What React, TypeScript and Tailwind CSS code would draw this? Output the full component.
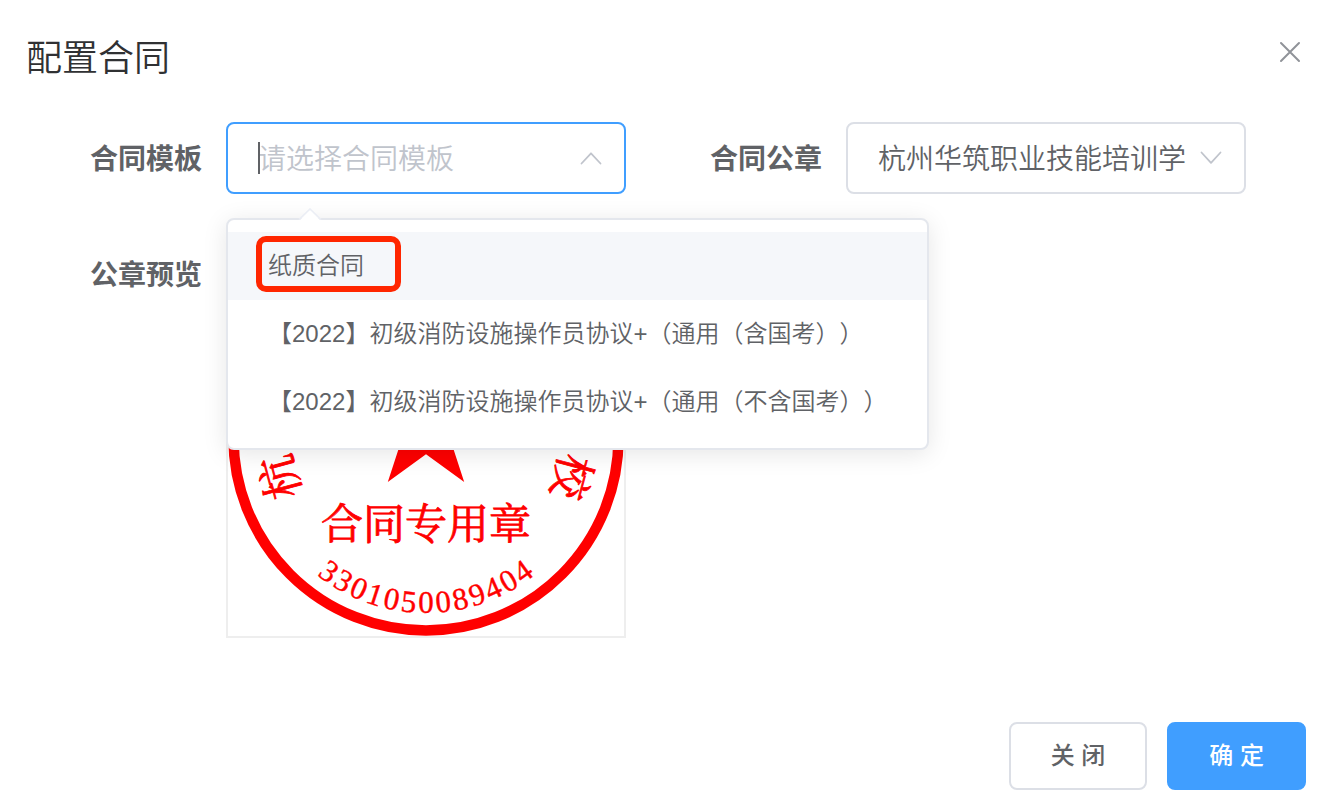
import { useState } from "react";

const templates = [
  "纸质合同",
  "【2022】初级消防设施操作员协议+（通用（含国考））",
  "【2022】初级消防设施操作员协议+（通用（不含国考））",
];

const company = "杭州华筑职业技能培训学校";
const sealNumber = "3301050089404";

function Chevron({ up = false }: { up?: boolean }) {
  return (
    <svg
      viewBox="0 0 24 24"
      className="pointer-events-none absolute top-1/2 right-[23px] size-6 -translate-y-1/2"
      fill="none"
      stroke="#c0c4cc"
      strokeWidth="1.8"
      strokeLinecap="round"
      strokeLinejoin="round"
      aria-hidden="true"
    >
      <path d={up ? "M2.5 17.5 12 7.3 21.5 17.5" : "M2.5 6.5 12 16.8 21.5 6.5"} />
    </svg>
  );
}

function Seal() {
  const last = company.length - 1;
  return (
    <svg viewBox="0 0 396 396" className="block w-full" fill="#ff0000" role="img" aria-label="合同专用章">
      <circle cx="198" cy="198" r="192.5" fill="none" stroke="#ff0000" strokeWidth="10.5" />
      <path d="M198 124.5 212.6 169.4 259.8 169.4 221.6 197.2 236.2 242 198 214.3 159.8 242 174.4 197.2 136.2 169.4 183.4 169.4Z" />
      <g fontFamily="'Noto Serif CJK SC','Noto Sans CJK SC',serif" fontWeight="400" stroke="#ff0000" strokeWidth="0.8" textAnchor="middle">
        {company.split("").map((ch, i) => (
          <text key={i} x="198" y="63" fontSize="44" transform={`rotate(${-105 + (210 * i) / last} 198 198)`}>
            {ch}
          </text>
        ))}
        <text x="198" y="299" fontSize="42">
          合同专用章
        </text>
      </g>
      <g fontFamily="'Liberation Serif',serif" fontSize="31" stroke="#ff0000" strokeWidth="0.4" textAnchor="middle">
        {sealNumber.split("").map((ch, i) => (
          <text key={i} x="198" y="373" transform={`rotate(${36 - 6 * i} 198 198)`}>
            {ch}
          </text>
        ))}
      </g>
    </svg>
  );
}

const labelClass = "h-[72px] w-[178px] shrink-0 pr-6 text-right text-[28px] leading-[76px] font-bold text-[#606266]";

export default function App() {
  const [template, setTemplate] = useState("");
  const [open, setOpen] = useState(true);

  return (
    <main className="min-h-screen bg-white pb-5 font-['Liberation_Sans','Noto_Sans_CJK_SC',sans-serif] font-[350] text-[#606266] [text-spacing-trim:space-all]">
      <header className="flex items-start justify-between pt-[34px] pr-[34px] pl-[26px]">
        <h1 className="text-4xl leading-[50px] font-[350] text-[#303133]">配置合同</h1>
        <button type="button" aria-label="关闭对话框" className="mt-1.5 text-[#909399]">
          <svg viewBox="0 0 24 24" className="size-6" fill="none" stroke="currentColor" strokeWidth="2" strokeLinecap="round">
            <path d="M3 3 21 21M21 3 3 21" />
          </svg>
        </button>
      </header>

      <form className="grid grid-cols-2 gap-y-11 px-12 pt-[38px]">
        <div className="flex pr-[42px]">
          <label htmlFor="template" className={labelClass}>
            合同模板
          </label>
          <div className="relative min-w-0 flex-1">
            <input
              id="template"
              type="text"
              role="combobox"
              aria-expanded={open}
              aria-controls="template-options"
              autoComplete="off"
              placeholder="请选择合同模板"
              value={template}
              onChange={(e) => setTemplate(e.target.value)}
              onClick={() => setOpen(!open)}
              className="block h-[72px] w-full rounded-lg border-2 border-[#409eff] bg-white pt-1 pr-[58px] pl-[30px] text-[28px] text-[#606266] caret-transparent outline-none placeholder:text-[#c0c4cc]"
            />
            {open && !template && <span className="absolute top-5 left-8 h-8 w-0.5 bg-[#606266]" />}
            <Chevron up />

            {open && (
              <div className="absolute top-24 left-0 z-10 rounded-lg border-2 border-[#e4e7ed] bg-white py-3 shadow-[0_4px_24px_rgba(0,0,0,0.1)]">
                <svg viewBox="0 0 24 12" className="absolute -top-3 left-[70px] h-3 w-6" aria-hidden="true">
                  <path d="M2 12 12 2 22 12Z" fill="#fff" />
                  <path d="M1 11.5 12 1 23 11.5" fill="none" stroke="#ebeef5" strokeWidth="1.6" />
                </svg>
                <ul id="template-options" role="listbox">
                  {templates.map((name, i) => (
                    <li
                      key={name}
                      role="option"
                      aria-selected={template === name}
                      onClick={() => {
                        setTemplate(name);
                        setOpen(false);
                      }}
                      className={
                        i === 0
                          ? "relative h-[68px] cursor-pointer bg-[#f5f7fa] px-10 text-2xl leading-[68px] whitespace-nowrap"
                          : "h-[68px] cursor-pointer px-10 text-2xl leading-[68px] whitespace-nowrap"
                      }
                    >
                      {name}
                      {i === 0 && (
                        <span className="absolute top-1 left-7 h-14 w-[145px] rounded-[10px] border-6 border-[#ff2600]" />
                      )}
                    </li>
                  ))}
                </ul>
              </div>
            )}
          </div>
        </div>

        <div className="flex pr-[42px]">
          <label htmlFor="seal" className={labelClass}>
            合同公章
          </label>
          <div className="relative min-w-0 flex-1">
            <select
              id="seal"
              className="block h-[72px] w-full appearance-none overflow-hidden rounded-lg border-2 border-[#dcdfe6] bg-white pt-1 pr-[58px] pl-[30px] text-[28px] text-[#606266]"
            >
              <option>{company}</option>
            </select>
            <Chevron />
          </div>
        </div>

        <div className="flex pr-[42px]">
          <span className={labelClass}>公章预览</span>
          <div className="min-w-0 flex-1 border-2 border-[#eeeeee]">
            <Seal />
          </div>
        </div>
      </form>

      <footer className="flex justify-end gap-5 pt-[84px] pr-[30px]">
        <button type="button" className="h-[68px] rounded-lg border-2 border-[#dcdfe6] bg-white px-10 text-2xl font-medium">
          关 闭
        </button>
        <button type="button" className="h-[68px] rounded-lg border-2 border-[#409eff] bg-[#409eff] px-10 text-2xl font-medium text-white">
          确 定
        </button>
      </footer>
    </main>
  );
}
